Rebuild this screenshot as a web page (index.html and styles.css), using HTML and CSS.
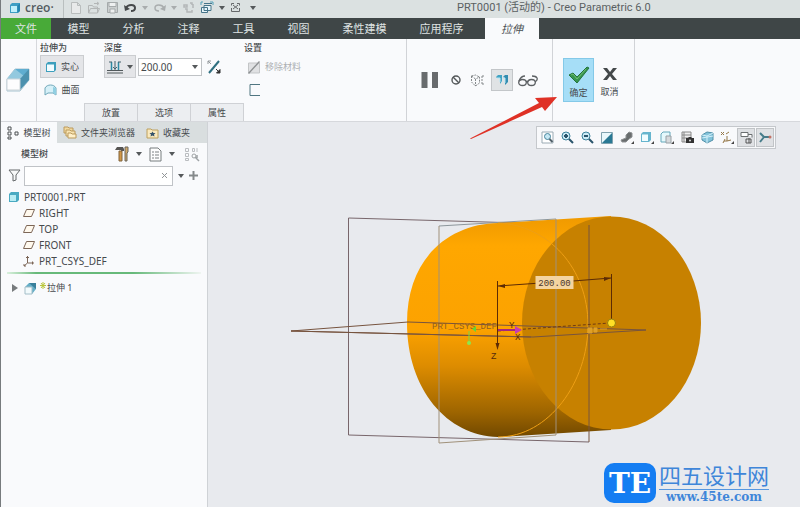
FILE: index.html
```html
<!DOCTYPE html>
<html lang="zh-CN">
<head>
<meta charset="utf-8">
<title>PRT0001 (活动的) - Creo Parametric 6.0</title>
<link rel="stylesheet" href="styles.css">
</head>
<body>
<div class="app">
  <header class="titlebar">
    <div class="brand">
      <svg width="12" height="12" viewBox="0 0 12 12"><path d="M1 3l2-2h8v8l-2 2H1z" fill="#3d9fc4"/><path d="M2 4h6v6H2z" fill="#bff0fb"/><path d="M8.500 3.500L11 1.500V9L8.500 11z" fill="#2385b0"/></svg>
      <span>creo·</span>
    </div>
    <div class="quick">
      <button aria-label="新建"><svg width="12" height="14" viewBox="0 0 12 14"><path d="M1.500 1.500h6l3 3v8h-9zM7.500 1.500v3h3" fill="#e8eaea" stroke="#b9bdbd"/></svg></button>
      <button aria-label="打开"><svg width="14" height="14" viewBox="0 0 14 14"><path d="M1.500 12V4.500h4l1 1.500h4v6zM1.500 12l2-4.500h9L10.500 12M7 2.500h4M10 1l2 1.500L10 4" fill="none" stroke="#b3b6b6"/></svg></button>
      <button aria-label="保存"><svg width="13" height="13" viewBox="0 0 13 13"><path d="M1.500 1.500h10v10h-10z" fill="#cbcfcf" stroke="#a5aaab"/><path d="M3 1.500h7v4H3zM4 8h5v4H4z" fill="#eef0f0" stroke="#a5aaab"/></svg></button>
      <button class="undo" aria-label="撤消"><svg width="13" height="12" viewBox="0 0 13 12"><path d="M2 6c2-4 9-4 9 0 0 2-2 3-4 3" fill="none" stroke="#46494b" stroke-width="2"/><path d="M0 3l1 6 5-2z" fill="#46494b"/></svg></button>
      <i class="caret pale"></i>
      <button class="redo" aria-label="重做"><svg width="13" height="12" viewBox="0 0 13 12"><path d="M11 6C9 2 2 2 2 6c0 2 2 3 4 3" fill="none" stroke="#a9adae" stroke-width="1.500"/><path d="M13 3l-1 6-5-2z" fill="#a9adae"/></svg></button>
      <i class="caret pale"></i>
      <button aria-label="重新生成"><svg width="13" height="13" viewBox="0 0 13 13"><path d="M2 4h3v2H2zM3 8h2v3h5V9M8 2h2v2M11 3v4" fill="none" stroke="#b4b7b8" stroke-width="1.500"/></svg></button>
      <button aria-label="窗口"><svg width="14" height="14" viewBox="0 0 14 14"><path d="M4 2.500h8M4 4.500h7v5H4zM1.500 6.500h6v5h-6z" fill="#e7f5fa" stroke="#467489"/><path d="M10 1h3v3M1 4V1h2" fill="none" stroke="#55a1b9"/></svg></button>
      <i class="caret"></i>
      <button aria-label="关闭"><svg width="11" height="11" viewBox="0 0 11 11"><path d="M4 1.500H1.500v2M7 1.500h2.500v2M1.500 6v3.500h8V6M3 3l5 4M8 3L3 7" fill="none" stroke="#66696b"/></svg></button>
      <i class="caret custom"></i>
    </div>
    <div class="doc-title">PRT0001 (活动的) - Creo Parametric 6.0</div>
  </header>

  <nav class="ribbon-tabs">
    <a class="file" href="#">文件</a><a href="#">模型</a><a href="#">分析</a><a href="#">注释</a><a href="#">工具</a><a href="#">视图</a><a class="wide" href="#">柔性建模</a><a class="wide" href="#">应用程序</a><a class="current" href="#">拉伸</a>
  </nav>

  <section class="ribbon">
    <div class="feature">
      <svg width="24" height="26" viewBox="0 0 24 26"><path d="M1 12L9 2h14v11l-9 11H1z" fill="#e5f3f8" stroke="#a8c3cf"/><path d="M9 2h14v11l-9-2z" fill="#5fadd0"/><path d="M9 2L23 13 14 23V12H1z" fill="#93c9df"/><path d="M14 12l9-10v11l-9 10z" fill="#4c91ae"/><path d="M1 12h13v11H1z" fill="#fdfdfe" stroke="#ccd4d9"/></svg>
    </div>
    <div class="settings">
      <div class="fields">
        <div class="col type">
          <h2>拉伸为</h2>
          <button class="opt on"><svg width="12" height="12" viewBox="0 0 12 12"><path d="M1 3l2-2h8v8l-2 2H1z" fill="#3d9fbd"/><path d="M2 3.500h7V10H2z" fill="#f2fcff"/></svg>实心</button>
          <button class="opt"><svg width="13" height="12" viewBox="0 0 13 12"><path d="M1 4c2-4 9-4 11 0v7L9 9H4l-3 2z" fill="#d6f0f8" stroke="#71a8ba"/><path d="M9 3l3 1v7L9 9z" fill="#91cfe2"/></svg>曲面</button>
        </div>
        <div class="col depth">
          <h2>深度</h2>
          <div class="depth-row">
            <button class="split" aria-label="深度类型"><svg width="16" height="14" viewBox="0 0 16 14"><path d="M0 10.500h16M0 13h16" stroke="#51585b"/><path d="M4.500 2v8M11.500 2v8" stroke="#2d8aa4" stroke-width="1.500"/><path d="M8 1v9M6 7l2 2 2-2M2 2h3M11 2h3" fill="none" stroke="#44616c"/></svg><i class="caret"></i></button>
            <label class="combo"><input type="text" value="200.00" aria-label="深度值"><i class="caret"></i></label>
            <button aria-label="反向"><svg width="14" height="14" viewBox="0 0 14 14"><path d="M2 13L12 1" stroke="#2f6f80" stroke-width="2"/><path d="M1 4V1h3M1 1l3 3" fill="none" stroke="#92979a"/><path d="M9 9l3 3M13 9.500V13H9.500z" fill="#333" stroke="#333"/></svg></button>
          </div>
        </div>
        <div class="col">
          <h2>设置</h2>
          <button class="remove" disabled><svg width="14" height="14" viewBox="0 0 14 14"><path d="M1.500 3h11v10h-11z" fill="#e0e1e3" stroke="#c3c5c7"/><path d="M1 13L12 1l1 1L2 14z" fill="#8e9193"/></svg>移除材料</button>
          <button class="thicken" aria-label="加厚草绘"><svg width="12" height="12" viewBox="0 0 12 12"><path d="M11 .5H1v11h10" fill="none" stroke="#507681"/></svg></button>
        </div>
      </div>
      <div class="subtabs"><button>放置</button><button>选项</button><button>属性</button></div>
    </div>
    <div class="preview">
      <button aria-label="暂停"><svg width="18" height="18" viewBox="0 0 18 18"><path d="M.5 1h6v16h-6zM11 1h6v16h-6z" fill="#686b6d"/></svg></button>
      <button class="none" aria-label="无预览"><svg width="10" height="10" viewBox="0 0 10 10"><circle cx="5" cy="5" r="4" fill="none" stroke="#54585a" stroke-width="1.400"/><path d="M2 2l6 6" stroke="#54585a" stroke-width="1.400"/></svg></button>
      <button aria-label="分离预览"><svg width="16" height="14" viewBox="0 0 16 14"><path d="M1.500 3v6l4 4 4-3V4l-4 2zM1.500 3l4-1 4 2M5.500 6v7M12 3v8M12 3h2M12 11h2" fill="none" stroke="#85898b" stroke-dasharray="2 1"/></svg></button>
      <button class="attached" aria-label="连接预览"><svg width="14" height="12" viewBox="0 0 14 12"><path d="M1 3l2-2h4v6l-2 3V4H2z" fill="#41a3c3"/><path d="M8 3l2-2h3v7l-3 3V4z" fill="#328db1"/><path d="M2 4h3v4M8 4h2v5" fill="none" stroke="#b5e6f5"/></svg></button>
      <button aria-label="特征预览"><svg width="20" height="14" viewBox="0 0 20 14"><g fill="none" stroke="#5c6063" stroke-width="1.300"><ellipse cx="4.500" cy="9.500" rx="3.800" ry="3"/><ellipse cx="13.500" cy="9.500" rx="3.800" ry="3"/><path d="M8 9q1-1 2 0M1 8q2-5 6-5M17 9q3-2 2-4t-5-2"/></g></svg></button>
    </div>
    <div class="finish">
      <button class="ok"><svg width="22" height="18" viewBox="0 0 22 18"><path d="M1 9l4-2 4 4L19 1l2 1L9 17z" fill="#369650" stroke="#23733b"/><path d="M3 9l2-1 4 5L18 3" fill="none" stroke="#70bd72"/></svg>确定</button>
      <button class="cancel"><svg width="16" height="14" viewBox="0 0 16 14"><path d="M1 1h4l3 4 3-4h4l-5 6 5 6h-4L8 9l-3 4H1l5-6z" fill="#44484a"/></svg>取消</button>
    </div>
    <svg class="pointer" width="88" height="45" viewBox="0 0 88 45"><path d="M0 43.500L69 8l-4-5L87 2 75 16l-3-4L1 44z" fill="#df3126"/></svg>
  </section>

  <main class="work">
    <aside class="navigator">
      <div class="nav-tabs">
        <button class="active"><svg width="12" height="14" viewBox="0 0 12 14"><path d="M1 1h3v3H1zM1 6h3v3H1zM1 11h3v2H1zM8 6h3v3H8z" fill="none" stroke="#4c5052"/></svg>模型树</button>
        <button><svg width="14" height="13" viewBox="0 0 14 13"><path d="M1 7V1h4l1 1h4v5z" fill="#f2d99e" stroke="#bb9a5c"/><path d="M3 10V4h4l1 1h4v5z" fill="#f8e4b2" stroke="#bb9a5c"/><path d="M5 12V7h3l1 1h4v4z" fill="#fff0ca" stroke="#bb9a5c"/></svg>文件夹浏览器</button>
        <button><svg width="13" height="12" viewBox="0 0 13 12"><path d="M1 11V2h4l1 1h6v8z" fill="#fae9bd" stroke="#bca05e"/><path d="M6.500 4.500l1 1.500h2L8 7.500 8.500 9.500l-2-1-2 1L5 7.500 3.500 6h2z" fill="#37546b"/></svg>收藏夹</button>
      </div>
      <div class="tree-head">
        <h1>模型树</h1>
        <button aria-label="设置"><svg width="14" height="16" viewBox="0 0 14 16"><path d="M0 4l2-3h6l1 2v2H6V4H2z" fill="#565553"/><path d="M4 5h3v10H4z" fill="#d39745" stroke="#80653f"/><path d="M10 1h3v5l-1 1v8h-2V7z" fill="#d2a969" stroke="#6b665d"/></svg></button><i class="caret"></i>
        <button aria-label="显示"><svg width="13" height="15" viewBox="0 0 13 15"><path d="M1 1h8l3 3v10H1z" fill="#fdfdfd" stroke="#777c7e"/><path d="M3 5h2M6 5h4M3 8h2M6 8h4M3 11h2M6 11h4" stroke="#7c8183"/></svg></button><i class="caret"></i>
        <button class="search-tree" aria-label="树过滤器"><svg width="16" height="15" viewBox="0 0 16 15"><path d="M1.500 1.500h3v3h-3zM1.500 6.500h3v3h-3zM1.500 11.500h3v2h-3zM8.500 1.500h2v3h-2zM13 1v4" fill="none" stroke="#babdc0"/><circle cx="10" cy="9" r="2" fill="none" stroke="#9ea2a5"/><path d="M11 10l4 4M13 8v3" stroke="#9ea2a5" stroke-width="1.500"/></svg></button>
      </div>
      <div class="filter">
        <svg width="13" height="13" viewBox="0 0 13 13"><path d="M1 1h11L8 6v5l-3 1V6z" fill="#f7f8f8" stroke="#65696b"/></svg>
        <div class="searchbox"><input type="text" aria-label="筛选模型树"><button aria-label="清除"><svg width="7" height="7" viewBox="0 0 7 7"><path d="M1 1l5 5M6 1L1 6" stroke="#929698"/></svg></button></div>
        <i class="caret"></i>
        <button aria-label="添加"><svg width="9" height="9" viewBox="0 0 9 9"><path d="M4.500 0v9M0 4.500h9" stroke="#85898b" stroke-width="2"/></svg></button>
      </div>
      <ul class="tree">
        <li class="root"><svg width="12" height="12" viewBox="0 0 12 12"><path d="M1 3l2-2h8v8l-2 2H1z" fill="#4aaac2"/><path d="M2 4h6v6H2z" fill="#b9ecf3"/></svg>PRT0001.PRT</li>
        <li><svg width="12" height="10" viewBox="0 0 12 10"><path d="M3.500 1.500h8l-3 7h-8z" fill="#fff9ee" stroke="#7c6657"/></svg>RIGHT</li>
        <li><svg width="12" height="10" viewBox="0 0 12 10"><path d="M3.500 1.500h8l-3 7h-8z" fill="#fff9ee" stroke="#7c6657"/></svg>TOP</li>
        <li><svg width="12" height="10" viewBox="0 0 12 10"><path d="M3.500 1.500h8l-3 7h-8z" fill="#fff9ee" stroke="#7c6657"/></svg>FRONT</li>
        <li><svg width="12" height="12" viewBox="0 0 12 12"><path d="M4.500 1v7L1 11M4.500 8H11M3 2.500h3M9.500 6.500v3M1 9v2h2" fill="none" stroke="#7c6657"/></svg>PRT_CSYS_DEF</li>
      </ul>
      <div class="insert-line"></div>
      <div class="active-feature"><svg class="expand" width="6" height="8" viewBox="0 0 6 8"><path d="M0 0l6 4-6 4z" fill="#777b7d"/></svg><svg width="13" height="13" viewBox="0 0 13 13"><path d="M1 5l4-4h7v6l-4 5H1z" fill="#65aec7"/><path d="M1 5h7v7H1z" fill="#f2fafc" stroke="#a4bec8"/><path d="M5 1l7 6V1z" fill="#397f9b"/></svg><svg class="spark" width="6" height="7" viewBox="0 0 6 7"><path d="M3 0v7M0 3.500h6M1 1l4 5M5 1L1 6" stroke="#b9c73d"/></svg>拉伸 1</div>
    </aside>

    <section class="viewport">
      <div class="view-tools">
        <button aria-label="重新调整"><svg width="13" height="13" viewBox="0 0 13 13"><path d="M1 1h11v11H1z" fill="#fff" stroke="#9babb4"/><circle cx="6.500" cy="5.500" r="3" fill="#c6e8f4" stroke="#47849c"/><path d="M8.500 8l3 3" stroke="#506069" stroke-width="2"/></svg></button>
        <button aria-label="放大"><svg width="13" height="13" viewBox="0 0 13 13"><circle cx="5" cy="5" r="4" fill="#cceaf5" stroke="#3c829c"/><path d="M3 5h4M5 3v4M8 8l4 4" stroke="#2a556c" stroke-width="2"/></svg></button>
        <button aria-label="缩小"><svg width="13" height="13" viewBox="0 0 13 13"><circle cx="5" cy="5" r="4" fill="#cceaf5" stroke="#3c829c"/><path d="M3 5h4M8 8l4 4" stroke="#2a556c" stroke-width="2"/></svg></button>
        <button aria-label="重画"><svg width="12" height="12" viewBox="0 0 12 12"><path d="M.5.500h11v11H.5z" fill="#e9f8fc" stroke="#80a2af"/><path d="M11 1v10H1z" fill="#297994"/></svg></button>
        <button aria-label="渲染"><svg width="14" height="13" viewBox="0 0 14 13"><path d="M1 9l5-2V4l3-3 3 1v4L9 8l-3 3H2z" fill="#696d6e" stroke="#8d9193"/><path d="M14 10v3h-3z" fill="#444"/></svg></button>
        <button aria-label="显示样式"><svg width="14" height="13" viewBox="0 0 14 13"><path d="M1 3l2-2h8v8l-2 2H1z" fill="#66b5ce"/><path d="M2 3.500h6V10H2z" fill="#f0fcff"/><path d="M14 10v3h-3z" fill="#444"/></svg></button>
        <button aria-label="已保存方向"><svg width="14" height="13" viewBox="0 0 14 13"><path d="M1 3l2-2h7v8l-2 2H1z" fill="#e5f8fc" stroke="#65a8bb"/><path d="M6 5h5v7H6z" fill="#d6d9dc" stroke="#97a0a5"/><path d="M14 10v3h-3z" fill="#444"/></svg></button>
        <button aria-label="视图管理器"><svg width="13" height="13" viewBox="0 0 13 13"><path d="M1 1h9v10H1zM3 1v10M1 4h9M1 7h9" fill="#eee" stroke="#888"/><path d="M5 7h2l1-1h2l1 1h2v5H5z" fill="#333"/><circle cx="9" cy="9.500" r="1" fill="#ddd"/></svg></button>
        <button aria-label="透视图"><svg width="13" height="13" viewBox="0 0 13 13"><path d="M1 4l5-3 6 1v7l-6 3-5-3z" fill="#83c3da" stroke="#5190a8"/><path d="M1 4l5 1 6-3M6 5v7M1 7l11-2" fill="none" stroke="#d4f0fa"/></svg></button>
        <button aria-label="基准显示"><svg width="14" height="13" viewBox="0 0 14 13"><path d="M1 1l3 3M4 1L1 4M6 3l3-2M7 5v5H4M7 10l4-1M3 12l2-4" fill="none" stroke="#947747"/><path d="M14 10v3h-3z" fill="#444"/></svg></button>
        <button class="pressed" aria-label="注释显示"><svg width="13" height="13" viewBox="0 0 13 13"><path d="M1 1.500h7v4H1zM8 3.500h4v3" fill="#fff" stroke="#6b6f70"/><path d="M6 8h5v4H6zM9 7v5" fill="none" stroke="#555"/></svg></button>
        <button class="pressed" aria-label="旋转中心"><svg width="13" height="13" viewBox="0 0 13 13"><path d="M1 2l4 4h5M5 6l-4 5" fill="none" stroke="#467c8a" stroke-width="2"/><circle cx="11" cy="6" r="1.500" fill="#c37165"/></svg></button>
      </div>
      <svg class="model" viewBox="208 122 592 385" role="img" aria-label="圆柱拉伸模型">
        <defs>
          <linearGradient id="side" x1="0" y1="220" x2="0" y2="438" gradientUnits="userSpaceOnUse"><stop offset="0" stop-color="#f19b00"/><stop offset=".12" stop-color="#ffa700"/><stop offset=".5" stop-color="#fca200"/><stop offset=".67" stop-color="#dd8c00"/><stop offset=".88" stop-color="#9e6500"/><stop offset="1" stop-color="#6f4700"/></linearGradient>
        </defs>
        <g fill="none" stroke="#78666b"><path d="M348.500 218L589 225M348.500 218v217L589 442"/><path d="M439 226l117-7" stroke="#8c969b"/></g>
        <path d="M498 223L611 216V430L498 437C447 436 407 389 407 323s43-99 91-100z" fill="url(#side)"/>
        <ellipse cx="611.500" cy="323" rx="89.500" ry="106.500" fill="#c78100"/>
        <path d="M498 223c50 2 90 45 90 102s-39 112-90 112" fill="none" stroke="#ee9f15"/>
        <g fill="none" stroke="#77543f">
          <path d="M589 225v217"/>
          <path d="M439 226v217l117-8V219" stroke="#a0917a"/>
          <path d="M291 331l117-9 238 8-113 7zM291 331l240 6" stroke-width="1"/>
          <path d="M498 331l112-8" stroke="#713b10" stroke-dasharray="3 2"/>
        </g>
        <path d="M497.500 281v62M611.500 274v46M498 286l57-4M573 281l38-3" fill="none" stroke="#5c2b05"/>
        <path d="M498 286l7-2v4zM611 278l-7-1v4zM497.500 350l-2-7h4z" fill="#5c2b05"/>
        <path class="dimension-bg" d="M535.500 276h38v13h-38z"/>
        <text class="dimension" x="554.500" y="286">200.00</text>
        <text class="datum" x="432" y="329">PRT_CSYS_DEF</text>
        <text class="axis" x="491" y="359">Z</text><text class="axis" x="509" y="328">Y</text><text class="axis" x="515" y="340">X</text>
        <path d="M498 330h18" stroke="#a62780" stroke-width="2"/><path d="M515 326l7 4-7 4z" fill="#c63cb4"/>
        <path d="M469 331v12" stroke="#75d948"/><circle cx="469" cy="343" r="2" fill="#8ce74e"/><path d="M472 329l4-3v6z" fill="#5fd739"/>
        <path d="M588 328h4v5h-4zM594 328h3v4h-3zM600 329h7" fill="#dfa029" stroke="#dfa029"/>
        <circle cx="611.500" cy="323" r="4" fill="#ffdf26" stroke="#98800c"/>
      </svg>
      <div class="watermark"><span class="badge">TE</span><div class="site"><strong>四五设计网</strong><span>www.45te.com</span></div></div>
    </section>
  </main>
</div>
</body>
</html>
```
FILE: styles.css
```css
* { box-sizing: border-box; }
body { margin: 0; background: #e8eaee; color: #45494c; font: 10px/14px "Noto Sans", "Noto Sans CJK SC", sans-serif; }
button { display: inline-flex; align-items: center; justify-content: center; padding: 0; border: 0; background: none; color: inherit; font: inherit; }
input { border: 0; outline: 0; min-width: 0; background: none; font: inherit; color: inherit; }
a { color: inherit; text-decoration: none; }
svg { flex: none; display: block; }
h1, h2 { margin: 0; font-weight: 500; }
.app { min-height: 100vh; display: flex; flex-direction: column; border-left: 1px solid #777b7d; }

.titlebar { display: flex; height: 18px; background: #dbe1e1; }
.brand { width: 63px; display: flex; align-items: center; gap: 4px; padding: 0 0 2px 8px; border-right: 1px solid #b9bfbf; font: 600 12px/16px "Open Sans", sans-serif; color: #535b60; }
.quick { width: 202px; display: flex; align-items: center; gap: 5px; padding: 0 0 3px 6px; }
.quick .custom { margin-left: 4px; }
.caret { flex: none; border: 3px solid transparent; border-top: 4px solid #55595b; border-bottom: 0; }
.quick .pale { border-top-color: #a9adae; }
.doc-title { flex: 1; padding-left: 191px; font: 11px/16px Roboto, "Noto Sans CJK SC", sans-serif; white-space: nowrap; color: #5a6062; }

.ribbon-tabs { display: flex; height: 21px; background: #3f4647; color: #dfe3e3; font-size: 11px; line-height: 21px; text-align: center; }
.ribbon-tabs a { width: 55px; }
.ribbon-tabs .wide { width: 77px; }
.ribbon-tabs .file { width: 50px; background: #48aa38; }
.ribbon-tabs .current { width: 54px; margin-left: 5px; background: #f9fafc; color: #4c5154; font-style: italic; }

.ribbon { position: relative; display: flex; height: 83px; background: #f9fafc; border-bottom: 1px solid #d6d8dc; }
.feature { width: 36px; padding: 28px 0 0 5px; border-right: 1px solid #d6d8dc; }
.settings { width: 370px; display: flex; flex-direction: column; justify-content: space-between; border-right: 1px solid #d1d3d7; }
.fields { display: flex; padding: 2px 0 0 3px; font-size: 9px; }
.type { width: 64px; }
.depth { width: 140px; }
.col { display: flex; flex-direction: column; align-items: flex-start; }
.col h2 { font-size: 9px; line-height: 14px; }
.opt { width: 44px; height: 23px; gap: 4px; border: 1px solid transparent; }
.opt.on { background: #e4e5e8; border-color: #cbcdd0; }
.depth-row { display: flex; align-items: center; gap: 2px; font-size: 10px; }
.split { width: 32px; height: 23px; gap: 4px; border: 1px solid #cbcdd0; background: #e4e5e8; }
.combo { width: 64px; height: 18px; display: flex; align-items: center; padding-right: 3px; border: 1px solid #bfc2c5; background: #fff; }
.combo input { flex: 1; width: 40px; padding: 0 2px; }
.combo .caret { margin-left: 5px; }
.depth-row > button:last-child { margin-left: 3px; }
.remove { height: 23px; gap: 4px; padding-left: 3px; color: #acafb2; }
.thicken { height: 23px; padding-left: 5px; }
.subtabs { display: flex; padding-left: 47px; }
.subtabs button { width: 53px; height: 18px; border: 1px solid #cfd1d5; border-left-width: 0; border-bottom: 0; background: #eceef1; font-size: 9px; }
.subtabs button:first-child { width: 54px; border-left-width: 1px; }
.preview { width: 146px; display: flex; align-items: center; justify-content: center; gap: 5px; border-right: 1px solid #d1d3d7; }
.none { padding: 0 4px 0 7px; }
.attached { width: 22px; height: 22px; border: 1px solid #c3c6c9; background: #e0e3e5; }
.finish { width: 82px; display: flex; align-items: center; padding-left: 10px; border-right: 1px solid #d1d3d7; font-size: 9px; }
.finish button { flex-direction: column; width: 31px; height: 44px; gap: 2px; padding-top: 6px; }
.finish .ok { border: 1px solid #84c9e8; background: #a6def7; }
.finish .cancel { gap: 4px; }
.pointer { position: absolute; left: 469px; top: 56px; z-index: 2; }

.work { flex: 1; display: flex; }
.navigator { width: 207px; background: #f9fafc; border-right: 1px solid #cfd2d6; }
.nav-tabs { display: flex; height: 21px; background: #d9dedf; font-size: 9px; }
.nav-tabs button { padding: 0 6px; gap: 4px; }
.nav-tabs .active { width: 56px; background: #f9fafc; }
.nav-tabs button + button { padding-right: 5px; }
.tree-head { display: flex; align-items: center; height: 22px; padding: 0 7px 0 20px; gap: 7px; }
.tree-head h1 { flex: 1; font-size: 9px; }
.tree-head .search-tree { margin-left: 2px; }
.filter { display: flex; align-items: center; gap: 3px; padding: 0 9px 0 7px; height: 21px; }
.searchbox { flex: 1; min-width: 0; height: 20px; display: flex; align-items: center; padding-right: 4px; border: 1px solid #c0c3c7; background: #fff; }
.searchbox input { flex: 1; }
.filter .caret { margin: 0 2px; }
.tree { margin: 0; padding: 3px 0 0; list-style: none; line-height: 16px; }
.tree li { display: flex; align-items: center; gap: 4px; padding-left: 22px; height: 16px; }
.tree .root { padding-left: 7px; }
.insert-line { height: 2px; margin: 3px 6px 6px; background: linear-gradient(90deg, #d9f0dd, #67b97a 15%, #67b97a 65%, #eff5f1); }
.active-feature { display: flex; align-items: center; padding-left: 11px; height: 16px; font-size: 9px; }
.expand { margin-right: 6px; }
.spark { margin: 0 1px 5px 3px; }

.viewport { position: relative; flex: 1; min-width: 0; background: #e8eaee; }
.model { width: 100%; height: auto; }
.view-tools { position: absolute; top: 4px; right: 24px; z-index: 1; display: flex; align-items: center; height: 23px; border: 1px solid #c5c8cc; background: #f8f9fb; }
.view-tools button { width: 20px; height: 19px; }
.view-tools .pressed { width: 18px; margin-right: 1px; border: 1px solid #c1c4c7; background: #dfe1e4; }
.dimension-bg { fill: #f4d4a1; }
.dimension { font: 9px "Liberation Mono", monospace; text-anchor: middle; fill: #49352a; }
.datum { font: 9px "Liberation Mono", monospace; fill: #925f20; }
.axis { font: 9px "Liberation Mono", monospace; fill: #572b0d; }
.watermark { position: absolute; right: 31px; bottom: 3px; display: flex; align-items: center; gap: 3px; color: #3f86d9; }
.badge { width: 52px; height: 40px; border-radius: 10px; background: #147df2; color: #fff; font: 700 28px/42px "DejaVu Serif", serif; text-align: center; }
.site { display: flex; flex-direction: column; text-align: center; font: 700 12px/14px "DejaVu Serif", serif; }
.site strong { padding: 0 0 2px; border-bottom: 1px solid #5797df; font: 400 22px/26px "Noto Sans CJK SC", sans-serif; }
```
